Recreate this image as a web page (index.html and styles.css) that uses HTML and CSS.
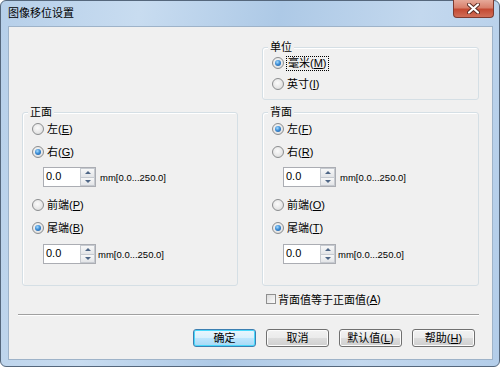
FILE: index.html
```html
<!DOCTYPE html>
<html lang="zh-CN">
  <head>
    <meta charset="UTF-8" />
    <meta name="viewport" content="width=device-width, initial-scale=1.0" />
    <title>图像移位设置</title>
    <link rel="stylesheet" href="styles.css">
  </head>
  <body>
    <div class="window">
      <div class="titlebar">
        <span class="title">图像移位设置</span>
        <span class="close">
          <svg width="13" height="11" viewBox="0 0 13 11">
            <path d="M2 1.5 L11 9.5 M11 1.5 L2 9.5" stroke="#5a2a22" stroke-width="4" stroke-linecap="round" />
            <path d="M2 1.5 L11 9.5 M11 1.5 L2 9.5" stroke="#fff" stroke-width="2.2" stroke-linecap="round" />
          </svg>
        </span>
      </div>

      <div class="client">
        <div class="groups">
          <fieldset class="group unit">
            <legend>单位</legend>
            <div class="opt"><span class="radio on"></span><span class="focus">毫米(<u>M</u>)</span></div>
            <div class="opt opt-2"><span class="radio"></span>英寸(<u>I</u>)</div>
          </fieldset>

          <fieldset class="group side">
            <legend>正面</legend>
            <div class="opt"><span class="radio"></span>左(<u>E</u>)</div>
            <div class="opt opt-gap"><span class="radio on"></span>右(<u>G</u>)</div>
            <div class="spin-row">
              <div class="spin">
                <span class="field">0.0</span>
                <span class="arrows"><span><i class="up"></i></span><span><i class="down"></i></span></span>
              </div>
              <span class="range">mm[0.0...250.0]</span>
            </div>
            <div class="opt opt-after-spin"><span class="radio"></span>前端(<u>P</u>)</div>
            <div class="opt opt-gap"><span class="radio on"></span>尾端(<u>B</u>)</div>
            <div class="spin-row spin-row-2">
              <div class="spin">
                <span class="field">0.0</span>
                <span class="arrows"><span><i class="up"></i></span><span><i class="down"></i></span></span>
              </div>
              <span class="range">mm[0.0...250.0]</span>
            </div>
          </fieldset>

          <fieldset class="group side">
            <legend>背面</legend>
            <div class="opt"><span class="radio on"></span>左(<u>F</u>)</div>
            <div class="opt opt-gap"><span class="radio"></span>右(<u>R</u>)</div>
            <div class="spin-row">
              <div class="spin">
                <span class="field">0.0</span>
                <span class="arrows"><span><i class="up"></i></span><span><i class="down"></i></span></span>
              </div>
              <span class="range">mm[0.0...250.0]</span>
            </div>
            <div class="opt opt-after-spin"><span class="radio"></span>前端(<u>O</u>)</div>
            <div class="opt opt-gap"><span class="radio on"></span>尾端(<u>T</u>)</div>
            <div class="spin-row spin-row-2">
              <div class="spin">
                <span class="field">0.0</span>
                <span class="arrows"><span><i class="up"></i></span><span><i class="down"></i></span></span>
              </div>
              <span class="range">mm[0.0...250.0]</span>
            </div>
          </fieldset>

          <div class="check"><span class="box"></span>背面值等于正面值(<u>A</u>)</div>
        </div>

        <div class="sep"></div>

        <div class="buttons">
          <button class="btn default">确定</button>
          <button class="btn">取消</button>
          <button class="btn">默认值(<u>L</u>)</button>
          <button class="btn">帮助(<u>H</u>)</button>
        </div>
      </div>
    </div>
  </body>
</html>
```

FILE: styles.css
```css
body {
  margin: 0;
  background: #fff;
  font-family: "Liberation Sans", "Noto Sans CJK SC", sans-serif;
  font-size: 11px;
  color: #000;
}

.window {
  width: 500px;
  height: 367px;
  box-sizing: border-box;
  display: flex;
  flex-direction: column;
  border: 1px solid #55677c;
  border-radius: 6px;
  background: linear-gradient(100deg, #b6cfe9 0%, #c8dcf0 25%, #adc9e6 50%, #c3d8ee 75%, #b3cde9 100%);
}

.titlebar {
  height: 25px;
  display: flex;
  align-items: flex-start;
  padding-left: 7px;
}

.title {
  line-height: 25px;
}

.close {
  margin-left: auto;
  margin-right: 5px;
  margin-top: -1px;
  width: 41px;
  height: 18px;
  box-sizing: border-box;
  display: flex;
  align-items: center;
  justify-content: center;
  border: 1px solid #7d3a30;
  border-top: none;
  border-radius: 0 0 4px 4px;
  background: linear-gradient(#e6a999 0%, #d8806c 45%, #c44a33 55%, #d06e58 100%);
}

.client {
  flex: 1;
  margin: 0 6px 6px 7px;
  background: #f0f0f0;
  border: 1px solid #9eb3c9;
  display: flex;
  flex-direction: column;
}

.groups {
  display: grid;
  grid-template-columns: 216px 217px;
  column-gap: 24px;
  padding: 13px 13px 0 13px;
}

.group {
  margin: 0;
  padding: 0 0 0 9px;
  min-width: 0;
  border: 1px solid #d5dfe5;
  border-radius: 3px;
  box-shadow: inset 1px 1px 0 #fff;
}

.group legend {
  margin-left: -4px;
  padding: 0 2px;
  line-height: 14px;
  background: #f0f0f0;
}

.unit {
  grid-column: 2;
  padding-bottom: 6px;
}

.side {
  margin-top: 5px;
  padding-top: 1px;
  padding-bottom: 21px;
}

.opt {
  display: flex;
  align-items: center;
  height: 18px;
  line-height: 18px;
}

.opt-2 {
  margin-top: 3px;
}

.opt-gap {
  margin-top: 5px;
}

.opt-after-spin {
  margin-top: 9px;
}

.radio {
  flex: none;
  width: 12px;
  height: 12px;
  box-sizing: border-box;
  margin-right: 3px;
  border: 1px solid #8b8d8f;
  border-radius: 50%;
  background: radial-gradient(circle at 45% 40%, #fbfbfb 0%, #e6e6e6 60%, #d2d2d2 100%);
  display: flex;
  align-items: center;
  justify-content: center;
}

.radio.on::after {
  content: "";
  width: 6px;
  height: 6px;
  border-radius: 50%;
  background: radial-gradient(circle at 40% 35%, #a6dcff 0%, #3f8fd6 45%, #144f96 100%);
}

.focus {
  outline: 1px dotted #000;
  line-height: 13px;
  padding: 0 1px;
}

.spin-row {
  display: flex;
  align-items: center;
  margin-top: 6px;
}

.spin-row-2 {
  margin-top: 7px;
}

.spin {
  display: flex;
  height: 20px;
  margin-left: 11px;
  border: 1px solid #abadb3;
  box-sizing: border-box;
  background: #fff;
}

.field {
  width: 36px;
  padding-left: 2px;
  box-sizing: border-box;
  line-height: 16px;
  font-size: 11px;
}

.arrows {
  width: 15px;
  display: flex;
  flex-direction: column;
}

.arrows span {
  flex: 1;
  display: flex;
  align-items: center;
  justify-content: center;
  border: 1px solid #c6cad0;
  background: linear-gradient(#f8f8f8, #e3e5e8);
}

.arrows span + span {
  border-top: none;
}

.up {
  border-left: 3px solid transparent;
  border-right: 3px solid transparent;
  border-bottom: 3px solid #4e6686;
}

.down {
  border-left: 3px solid transparent;
  border-right: 3px solid transparent;
  border-top: 3px solid #4e6686;
}

.range {
  margin-left: 4px;
  font-size: 9.5px;
}

.spin-row-2 .range {
  margin-left: 2px;
}

.check {
  grid-column: 2;
  margin-top: 6px;
  margin-left: 4px;
  height: 14px;
  display: flex;
  align-items: center;
}

.box {
  width: 10px;
  height: 10px;
  box-sizing: border-box;
  margin-right: 2px;
  border: 1px solid #8f8f8f;
  background: linear-gradient(135deg, #dcdcdc, #fbfbfb);
}

.sep {
  margin: 8px 13px 0 9px;
  border-top: 1px solid #a0a0a0;
  border-bottom: 1px solid #fff;
}

.buttons {
  display: flex;
  justify-content: flex-end;
  gap: 10px;
  margin-top: 13px;
  padding: 0 17px 12px 0;
}

.btn {
  width: 63px;
  height: 18px;
  box-sizing: border-box;
  padding: 0;
  font: inherit;
  line-height: 16px;
  color: #000;
  border: 1px solid #707070;
  border-radius: 3px;
  background: linear-gradient(#f2f2f2 0%, #ebebeb 50%, #dddddd 50%, #cfcfcf 100%);
  box-shadow: inset 0 0 0 1px #fcfcfc;
}

.btn.default {
  border-color: #3c7fb1;
  background: linear-gradient(#eaf6fd 0%, #d9f0fc 50%, #bee6fd 50%, #a7d9f5 100%);
  box-shadow: inset 0 0 0 1px #48d8fb;
}
```
